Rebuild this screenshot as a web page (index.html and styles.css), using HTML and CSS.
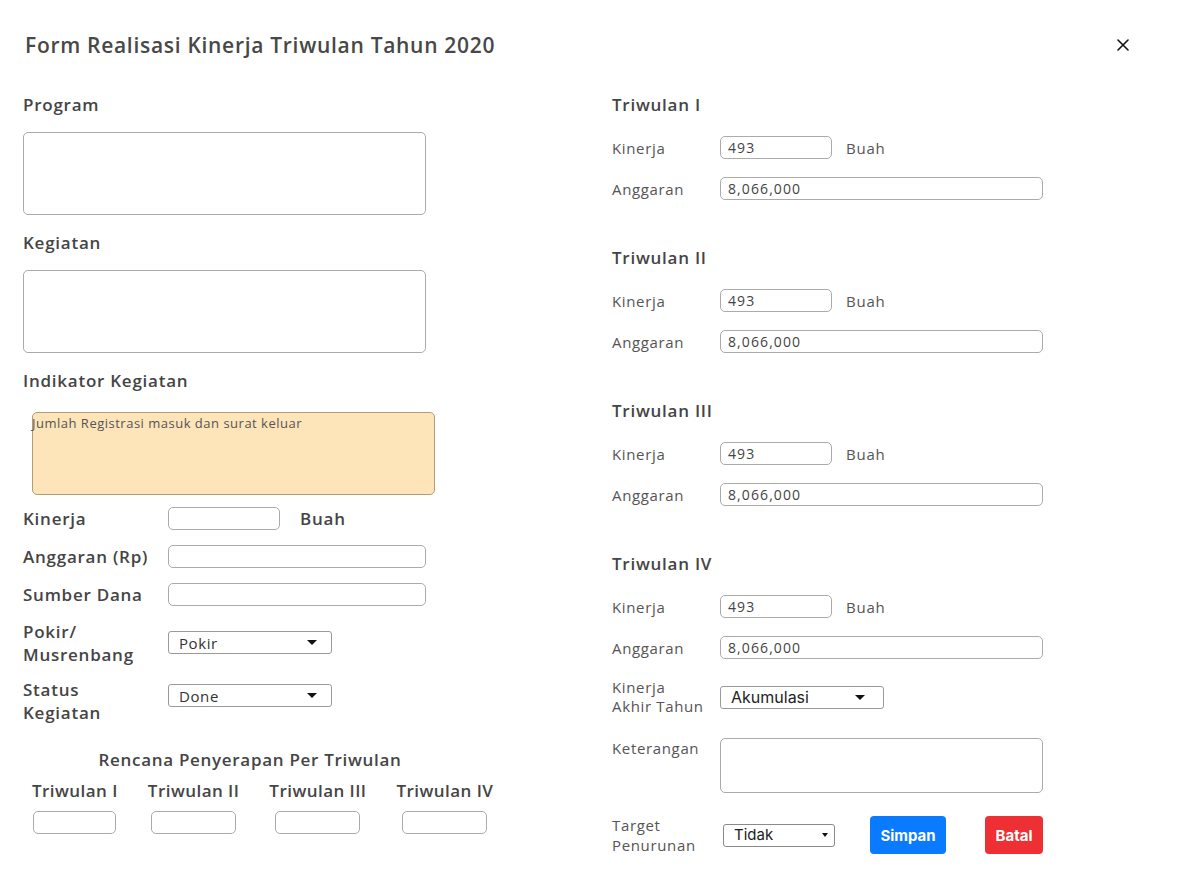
FILE: index.html
```html
<!DOCTYPE html>
<html lang="id">
<head>
<meta charset="utf-8">
<title>Form Realisasi Kinerja</title>
<link rel="stylesheet" href="styles.css">
</head>
<body>
<div class="modal">
  <header class="modal-head">
    <h1 class="title">Form Realisasi Kinerja Triwulan Tahun 2020</h1>
    <svg class="close" width="12" height="12" viewBox="0 0 12 12"><path d="M1 1L11 11M11 1L1 11" stroke="#111" stroke-width="1.6" stroke-linecap="round"/></svg>
  </header>
  <div class="modal-body">
    <section class="col-left">
      <div class="lbl-lg">Program</div>
      <div class="textarea ta-left"></div>
      <div class="lbl-lg mt18">Kegiatan</div>
      <div class="textarea ta-left"></div>
      <div class="lbl-lg mt18">Indikator Kegiatan</div>
      <div class="indikator">Jumlah Registrasi masuk dan surat keluar</div>

      <div class="frow first">
        <div class="flabel">Kinerja</div>
        <div class="input in-short"></div>
        <div class="unit-lg">Buah</div>
      </div>
      <div class="frow">
        <div class="flabel">Anggaran (Rp)</div>
        <div class="input in-wide"></div>
      </div>
      <div class="frow">
        <div class="flabel">Sumber Dana</div>
        <div class="input in-wide"></div>
      </div>
      <div class="frow two pokir">
        <div class="flabel">Pokir/<br>Musrenbang</div>
        <div class="select sel-left"><span>Pokir</span><i class="caret"></i></div>
      </div>
      <div class="frow two status">
        <div class="flabel">Status<br>Kegiatan</div>
        <div class="select sel-left"><span>Done</span><i class="caret"></i></div>
      </div>

      <div class="rencana">Rencana Penyerapan Per Triwulan</div>
      <div class="tw-grid">
        <div class="tw-cell"><div class="tw-lbl">Triwulan I</div><div class="input tw-in first-in"></div></div>
        <div class="tw-cell"><div class="tw-lbl">Triwulan II</div><div class="input tw-in"></div></div>
        <div class="tw-cell"><div class="tw-lbl">Triwulan III</div><div class="input tw-in"></div></div>
        <div class="tw-cell"><div class="tw-lbl">Triwulan IV</div><div class="input tw-in"></div></div>
      </div>
    </section>

    <section class="col-right">
      <div class="quarter">
        <div class="lbl-lg">Triwulan I</div>
        <div class="rrow r1"><div class="rlabel">Kinerja</div><div class="input rin-short">493</div><div class="unit">Buah</div></div>
        <div class="rrow r2"><div class="rlabel">Anggaran</div><div class="input rin-wide">8,066,000</div></div>
      </div>
      <div class="quarter">
        <div class="lbl-lg">Triwulan II</div>
        <div class="rrow r1"><div class="rlabel">Kinerja</div><div class="input rin-short">493</div><div class="unit">Buah</div></div>
        <div class="rrow r2"><div class="rlabel">Anggaran</div><div class="input rin-wide">8,066,000</div></div>
      </div>
      <div class="quarter">
        <div class="lbl-lg">Triwulan III</div>
        <div class="rrow r1"><div class="rlabel">Kinerja</div><div class="input rin-short">493</div><div class="unit">Buah</div></div>
        <div class="rrow r2"><div class="rlabel">Anggaran</div><div class="input rin-wide">8,066,000</div></div>
      </div>
      <div class="quarter">
        <div class="lbl-lg">Triwulan IV</div>
        <div class="rrow r1"><div class="rlabel">Kinerja</div><div class="input rin-short">493</div><div class="unit">Buah</div></div>
        <div class="rrow r2"><div class="rlabel">Anggaran</div><div class="input rin-wide">8,066,000</div></div>
      </div>

      <div class="rrow akhir">
        <div class="rlabel two19">Kinerja<br>Akhir Tahun</div>
        <div class="select sel-akhir"><span>Akumulasi</span><i class="caret"></i></div>
      </div>
      <div class="rrow ket">
        <div class="rlabel">Keterangan</div>
        <div class="textarea ta-ket"></div>
      </div>
      <div class="rrow target">
        <div class="rlabel two20">Target<br>Penurunan</div>
        <div class="select sel-tidak"><span>Tidak</span><i class="caret small"></i></div>
        <button class="btn btn-primary">Simpan</button>
        <button class="btn btn-danger">Batal</button>
      </div>
    </section>
  </div>
</div>
</body>
</html>
```

FILE: styles.css
```css
* { box-sizing: border-box; }
html, body { margin: 0; padding: 0; background: #fff; }
body {
  font-family: "Open Sans", "Noto Sans", "DejaVu Sans", sans-serif;
  color: #444;
}
.modal { width: 1178px; height: 886px; }
.modal-head {
  display: flex;
  align-items: center;
  justify-content: space-between;
  padding: 33px 49px 0 25px;
}
.title {
  margin: 0;
  font-size: 21px;
  line-height: 24px;
  font-weight: 600;
  color: #484848;
  letter-spacing: 0.7px;
}
.close { display: block; }

.modal-body {
  display: grid;
  grid-template-columns: 454px 431px;
  column-gap: 135px;
  padding: 38px 0 0 23px;
}

.lbl-lg {
  font-size: 17px;
  line-height: 20px;
  font-weight: 600;
  color: #454545;
  letter-spacing: 0.75px;
}
.mt18 { margin-top: 18px; }

.textarea {
  border: 1px solid #ababab;
  border-radius: 5px;
  background: #fff;
}
.ta-left { width: 403px; height: 83px; margin-top: 17px; }

.indikator {
  margin: 21px 0 0 9px;
  width: 403px;
  height: 83px;
  background: #fee4b9;
  border: 1px solid #b39d78;
  border-radius: 5px;
  font-size: 13px;
  line-height: 18px;
  color: #555;
  padding: 1px 0 0 0;
  text-indent: -1px;
  letter-spacing: 0.5px;
}

.frow { display: flex; align-items: center; margin-top: 15px; height: 23px; }
.frow.first { margin-top: 12px; }
.frow.two { height: 46px; align-items: flex-start; }
.frow.pokir { margin-top: 14px; }
.frow.status { margin-top: 12px; }
.frow.pokir .select { margin-top: 11px; }
.frow.status .select { margin-top: 6px; }
.flabel {
  width: 145px;
  flex: none;
  font-size: 17px;
  line-height: 23px;
  font-weight: 600;
  color: #454545;
  letter-spacing: 0.75px;
}
.input {
  height: 23px;
  border: 1px solid #ababab;
  border-radius: 5px;
  background: #fff;
  font-size: 14px;
  line-height: 21px;
  padding-left: 7px;
  color: #444;
  letter-spacing: 1.1px;
}
.in-short { width: 112px; }
.in-wide { width: 258px; }
.unit-lg {
  margin-left: 20px;
  font-size: 17px;
  font-weight: 600;
  color: #454545;
  letter-spacing: 0.8px;
}

.select {
  display: flex;
  align-items: center;
  justify-content: space-between;
  height: 23px;
  border: 1px solid #9a9a9a;
  border-radius: 3px;
  background: #fff;
  padding: 0 14px 0 10px;
  color: #222;
}
.select span { line-height: 20px; }
.sel-left { width: 164px; font-size: 15px; color: #333; letter-spacing: 0.6px; }
.caret {
  width: 0; height: 0;
  border-left: 5px solid transparent;
  border-right: 5px solid transparent;
  border-top: 5px solid #111;
}
.caret.small {
  border-left-width: 3.5px;
  border-right-width: 3.5px;
  border-top-width: 4px;
}

.rencana {
  width: 454px;
  margin-top: 26px;
  text-align: center;
  font-size: 17px;
  line-height: 20px;
  font-weight: 600;
  color: #454545;
  letter-spacing: 0.7px;
}
.tw-grid {
  display: flex;
  gap: 30px;
  margin: 11px 0 0 9px;
}
.tw-cell { flex: none; display: flex; flex-direction: column; align-items: center; }
.tw-lbl {
  white-space: nowrap;
  font-size: 17px;
  line-height: 20px;
  font-weight: 600;
  color: #454545;
  letter-spacing: 0.45px;
}
.tw-in { width: 85px; margin-top: 10px; }
.tw-in.first-in { width: 83px; }

.col-right { display: flex; flex-direction: column; }
.quarter + .quarter { margin-top: 48px; }
.rrow { display: flex; align-items: center; }
.r1 { margin-top: 21px; }
.r2 { margin-top: 18px; }
.rlabel {
  width: 108px;
  flex: none;
  font-size: 15px;
  line-height: 20px;
  color: #555;
  letter-spacing: 0.65px;
}
.rin-short { width: 112px; }
.rin-wide { width: 323px; }
.unit {
  margin-left: 14px;
  font-size: 15px;
  color: #555;
  letter-spacing: 0.8px;
}
.akhir { margin-top: 19px; }
.two19 { line-height: 19px; }
.sel-akhir {
  width: 164px;
  font-family: Inter, "Liberation Sans", sans-serif;
  font-size: 16px;
  padding: 0 18px 0 10px;
}
.ket { margin-top: 22px; align-items: flex-start; }
.ta-ket { width: 323px; height: 55px; }
.target { margin-top: 22px; }
.sel-tidak {
  width: 112px;
  margin-left: 3px;
  font-family: Inter, "Liberation Sans", sans-serif;
  font-size: 15px;
  padding: 0 6px 0 10px;
  border-color: #8a8a8a;
}
.btn {
  height: 38px;
  border: none;
  border-radius: 4px;
  color: #fff;
  font-family: Inter, "Liberation Sans", sans-serif;
  font-weight: 700;
  font-size: 15px;
  padding: 0;
}
.btn-primary { width: 76px; margin-left: 35px; background: #0a7bff; }
.btn-danger { width: 58px; margin-left: 39px; background: #ee3034; }
```
